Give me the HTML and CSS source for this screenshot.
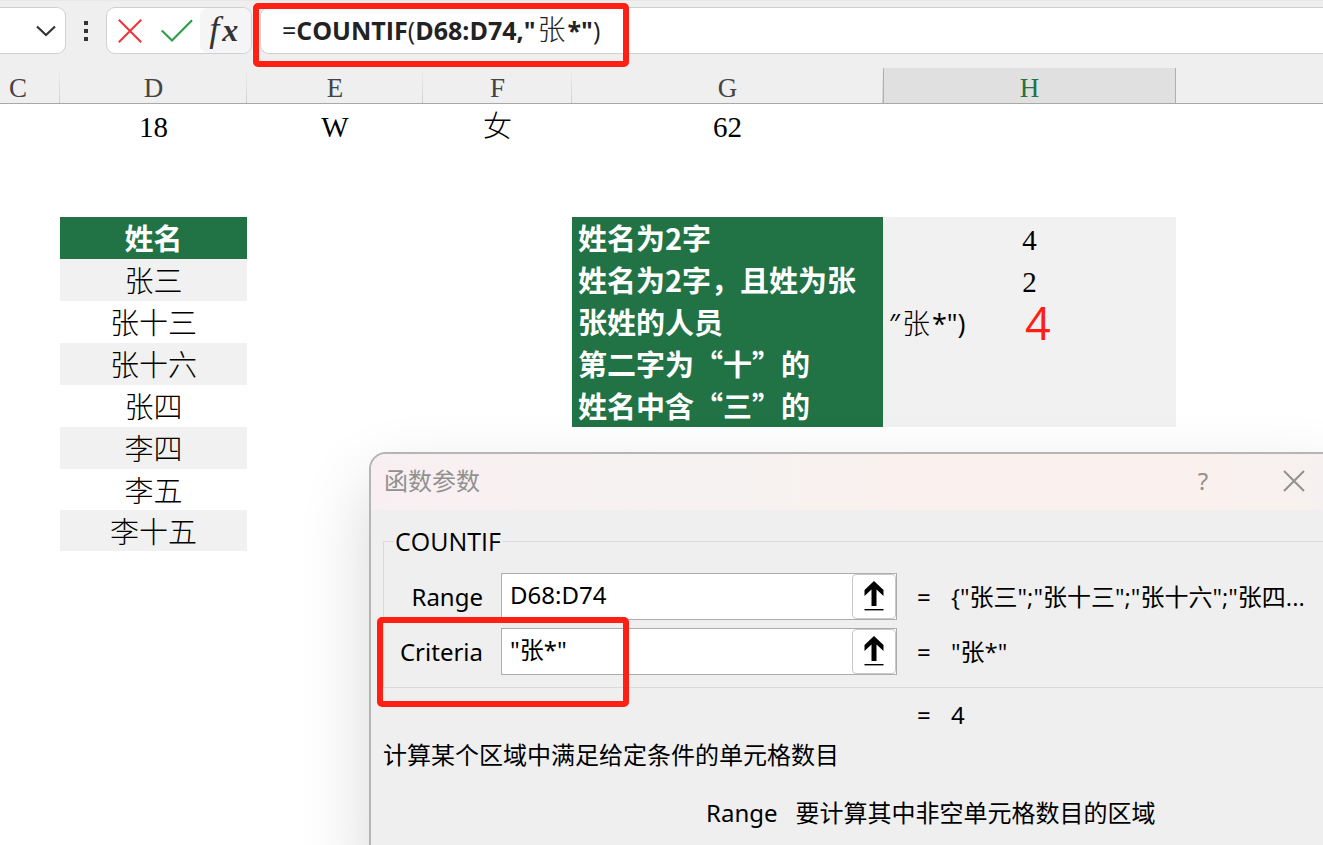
FILE: index.html
```html
<!DOCTYPE html>
<html lang="zh-CN">
<head>
<meta charset="utf-8">
<title>函数参数</title>
<link rel="stylesheet" href="styles.css">
</head>
<body>
<main class="app">
  <header class="formula-bar">
    <button class="name-box" type="button" aria-label="名称框">
      <svg width="20" height="12" viewBox="0 0 20 12"><path d="M1 1.5 10 10 19 1.5" fill="none" stroke="#333" stroke-width="2.2"/></svg>
    </button>
    <span class="grip"><i></i><i></i><i></i></span>
    <div class="tools">
      <button type="button" aria-label="取消">
        <svg width="24" height="24" viewBox="0 0 24 24"><path d="M.8.8 23.2 23.2M23.2.8.8 23.2" stroke="#f0353b" stroke-width="2.1"/></svg>
      </button>
      <button type="button" aria-label="输入">
        <svg width="32" height="24" viewBox="0 0 32 24"><path d="M.8 11.5 11 21.5 31 1.2" fill="none" stroke="#2c9f49" stroke-width="2.2"/></svg>
      </button>
      <button class="fx" type="button" aria-label="插入函数"><span>f</span><span class="fx-x">x</span></button>
    </div>
    <div class="formula" role="textbox" contenteditable="true" spellcheck="false" aria-label="编辑栏"><span>=</span><b>COUNTIF</b><span>(</span><b>D68:D74,"</b><span class="song">张</span><b>*"</b><span>)</span></div>
    <span class="mark mark-formula"></span>
  </header>

  <table class="sheet">
    <colgroup><col class="c"><col class="d"><col class="e"><col class="f"><col class="g"><col class="h"><col></colgroup>
    <thead>
      <tr><th class="first">C</th><th>D</th><th>E</th><th>F</th><th>G</th><th class="active">H</th><th class="rest"></th></tr>
    </thead>
    <tbody>
      <tr class="top"><td></td><td>18</td><td>W</td><td>女</td><td>62</td><td></td><td></td></tr>
      <tr class="gap"><td colspan="7"></td></tr>
      <tr><td></td><td class="title">姓名</td><td></td><td></td><td class="rule">姓名为2字</td><td class="shade">4</td><td></td></tr>
      <tr><td></td><td class="shade">张三</td><td></td><td></td><td class="rule">姓名为2字，且姓为张</td><td class="shade">2</td><td></td></tr>
      <tr><td></td><td>张十三</td><td></td><td></td><td class="rule">张姓的人员</td><td class="shade editing">″<span class="song">张</span>*")<span class="note">4</span></td><td></td></tr>
      <tr><td></td><td class="shade">张十六</td><td></td><td></td><td class="rule">第二字为“十”的</td><td class="shade"></td><td></td></tr>
      <tr><td></td><td>张四</td><td></td><td></td><td class="rule">姓名中含“三”的</td><td class="shade"></td><td></td></tr>
      <tr><td></td><td class="shade">李四</td><td></td><td></td><td></td><td></td><td></td></tr>
      <tr class="short"><td></td><td>李五</td><td></td><td></td><td></td><td></td><td></td></tr>
      <tr class="short"><td></td><td class="shade">李十五</td><td></td><td></td><td></td><td></td><td></td></tr>
    </tbody>
  </table>

  <section class="dialog" role="dialog" aria-labelledby="dialog-title">
    <div class="titlebar">
      <h1 id="dialog-title">函数参数</h1>
      <button type="button" aria-label="帮助">?</button>
      <button type="button" aria-label="关闭"><svg width="22" height="22" viewBox="0 0 22 22"><path d="M1 1 21 21M21 1 1 21" stroke="#929090" stroke-width="2"/></svg></button>
    </div>
    <fieldset class="args">
      <legend>COUNTIF</legend>
      <div class="arg">
        <label for="range">Range</label>
        <div class="field"><input id="range" type="text" value="D68:D74"><button type="button" aria-label="选择 Range"><svg width="20" height="30" viewBox="0 0 20 30"><path d="M10 0 19.5 9V15L12.5 8.5V25h-5V8.5L.5 15V9Z"/><path d="M.5 28h19v1.4H.5z"/></svg></button></div>
        <span>=</span>
        <output for="range">{"张三";"张十三";"张十六";"张四...</output>
      </div>
      <div class="arg">
        <label for="criteria">Criteria</label>
        <div class="field"><input id="criteria" type="text" value="&quot;张*&quot;"><button type="button" aria-label="选择 Criteria"><svg width="20" height="30" viewBox="0 0 20 30"><path d="M10 0 19.5 9V15L12.5 8.5V25h-5V8.5L.5 15V9Z"/><path d="M.5 28h19v1.4H.5z"/></svg></button></div>
        <span>=</span>
        <output for="criteria">"张*"</output>
      </div>
      <span class="mark mark-criteria"></span>
    </fieldset>
    <div class="result"><span>=</span><output>4</output></div>
    <p class="about">计算某个区域中满足给定条件的单元格数目</p>
    <dl class="help"><dt>Range</dt><dd>要计算其中非空单元格数目的区域</dd></dl>
  </section>
</main>
</body>
</html>
```

FILE: styles.css
```css
* { box-sizing: border-box; }

body {
  margin: 0;
  background: #fff;
  color: #000;
}

button {
  margin: 0;
  padding: 0;
  border: 0;
  background: none;
  display: flex;
  align-items: center;
  justify-content: center;
}

.app {
  position: relative;
  min-height: 100vh;
  overflow: hidden;
}

/* Formula bar */
.formula-bar {
  position: relative;
  display: flex;
  align-items: center;
  height: 68px;
  padding: 0 0 8px;
  background: #efefef;
  border-top: 1px solid #e8e8e8;
}

.name-box {
  width: 66px;
  height: 47px;
  padding-right: 9px;
  justify-content: flex-end;
  background: #fff;
  border: 1px solid #d0d0d0;
  border-left: 0;
  border-radius: 0 9px 9px 0;
}

.grip {
  display: flex;
  flex-direction: column;
  gap: 4px;
  width: 40px;
  align-items: center;
}

.grip i {
  width: 4px;
  height: 4px;
  background: #333;
}

.tools {
  display: flex;
  width: 146px;
  height: 47px;
  background: #fff;
  border: 1px solid #d0d0d0;
  border-radius: 9px;
  overflow: hidden;
}

.tools button { flex: 1; }

.tools .fx {
  align-items: baseline;
  padding-right: 4px;
  background: #f5f5f5;
  border-radius: 8px;
  font: italic 36px/42px "Liberation Serif", serif;
  color: #333;
}

.fx-x {
  margin-left: 3px;
  font-size: 32px;
  font-weight: 700;
}

.formula {
  flex: 1;
  height: 47px;
  margin-left: 8px;
  padding-left: 21px;
  background: #fff;
  border: 1px solid #d0d0d0;
  border-right: 0;
  border-radius: 9px 0 0 9px;
  font: 25px/40px "Open Sans", "Noto Sans CJK SC", sans-serif;
  color: #222;
  white-space: nowrap;
}

.song {
  padding: 0 2px;
  font-family: "Noto Sans CJK SC", sans-serif;
  font-size: 28px;
  font-weight: 300;
}

.mark {
  position: absolute;
  border: 6px solid #ff2013;
  border-radius: 5px;
  pointer-events: none;
}

.mark-formula {
  left: 253px;
  top: 2px;
  width: 376px;
  height: 64px;
}

/* Grid */
.sheet {
  width: 100%;
  table-layout: fixed;
  border-collapse: separate;
  border-spacing: 0;
  font: 300 29px/34px "Liberation Serif", "Noto Sans CJK SC", serif;
  text-align: center;
}

.c { width: 60px; }
.d { width: 187px; }
.e { width: 176px; }
.f { width: 149px; }
.g { width: 311px; }
.h { width: 293px; }

.sheet th {
  height: 36px;
  padding: 4px 0 0;
  background: linear-gradient(#efefef, #cfcfcf) right / 1px 100% no-repeat #efefef;
  border-bottom: 1px solid #a8a8a8;
  font-size: 27px;
  line-height: 30px;
  font-weight: 400;
  color: #444;
}

.sheet .first { padding-right: 24px; }
.sheet .rest { background: #efefef; }

.sheet .active {
  background: #e0e0e0;
  border-left: 1px solid #b0b0b0;
  border-right: 1px solid #b0b0b0;
  color: #217346;
}

.sheet td {
  height: 42px;
  padding: 4px 0 0;
}

.sheet .top td {
  height: 43px;
  padding-top: 2px;
}

.sheet .gap td { height: 70px; }
.sheet .short td { height: 41px; }
.sheet .shade { background: #f1f1f1; }

.sheet .title,
.sheet .rule {
  padding: 0 0 2px;
  background: #217346;
  color: #fff;
  font-family: "Noto Sans CJK SC", sans-serif;
  font-weight: 700;
}

.sheet .rule {
  padding-left: 6px;
  text-align: left;
  white-space: nowrap;
}

.sheet .editing {
  position: relative;
  padding: 2px 0 0 6px;
  text-align: left;
  font-family: "Open Sans", "Noto Sans CJK SC", sans-serif;
  font-size: 27px;
  font-weight: 400;
}

.note {
  position: absolute;
  left: 142px;
  top: 6px;
  font: 45px/32px "Open Sans", sans-serif;
  color: #ff2013;
}

/* Dialog */
.dialog {
  position: absolute;
  left: 369px;
  right: -24px;
  top: 452px;
  bottom: -24px;
  background: #efefef;
  border: 2px solid #b5b5b5;
  border-radius: 17px 17px 0 0;
  box-shadow: 0 30px 70px rgba(0, 0, 0, .16);
  font: 24px/36px "Noto Sans", "Noto Sans CJK SC", sans-serif;
}

.titlebar {
  display: flex;
  align-items: center;
  height: 56px;
  padding: 0 39px 2px 13px;
  border-radius: 15px 15px 0 0;
  background: linear-gradient(90deg, #f9eff2, #f5f2f1 35%, #faf0ee 55%, #faf0ee 85%, #f5f1f0);
  color: #929090;
}

.titlebar h1 {
  flex: 1;
  margin: 0;
  font: inherit;
}

.titlebar button {
  width: 24px;
  height: 36px;
  color: inherit;
  font: inherit;
}

.titlebar button + button { margin-left: 67px; }

.args {
  position: relative;
  display: flex;
  flex-direction: column;
  gap: 8px;
  margin: 13px 0 0 12px;
  padding: 14px 0 12px;
  border: 1px solid #dadada;
  border-right: 0;
}

.args legend {
  margin-left: 10px;
  padding: 0 2px 0 1px;
  font-family: "Open Sans", sans-serif;
  font-size: 25px;
  line-height: 36px;
}

.arg {
  display: grid;
  grid-template-columns: 99px 434px 34px 1fr;
  align-items: center;
}

.arg label { text-align: right; }

.field {
  display: flex;
  width: 396px;
  height: 47px;
  margin-left: 18px;
  background: #fff;
  border: 1px solid #acacac;
}

.field input {
  flex: 1;
  min-width: 0;
  padding: 0 0 4px 8px;
  border: 0;
  outline: 0;
  background: none;
  font: inherit;
  color: inherit;
}

.field button {
  width: 44px;
  padding: 0 1px 2px 0;
  border: 1px solid #c8c8c8;
  border-radius: 4px;
}

.arg output {
  font-family: "Open Sans", "Noto Sans CJK SC", sans-serif;
  white-space: nowrap;
}

.mark-criteria {
  left: -7px;
  top: 58px;
  width: 252px;
  height: 90px;
}

.result {
  display: flex;
  padding: 9px 0 0 546px;
}

.result span { width: 34px; }

.about {
  margin: 4px 0 0 12px;
}

.help {
  display: flex;
  gap: 18px;
  margin: 22px 0 0 335px;
}

.help dd { margin: 0; }
```
